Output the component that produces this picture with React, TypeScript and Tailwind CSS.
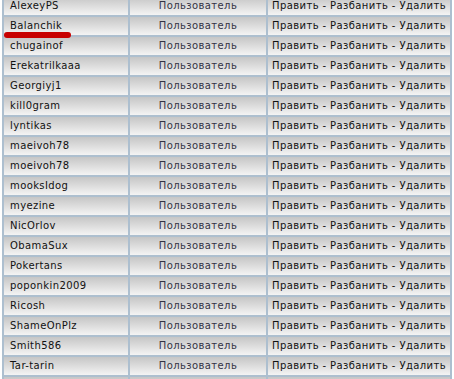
const users = [
  "AlexeyPS",
  "Balanchik",
  "chugainof",
  "Erekatrilkaaa",
  "Georgiyj1",
  "kill0gram",
  "lyntikas",
  "maeivoh78",
  "moeivoh78",
  "mooksIdog",
  "myezine",
  "NicOrlov",
  "ObamaSux",
  "Pokertans",
  "poponkin2009",
  "Ricosh",
  "ShameOnPlz",
  "Smith586",
  "Tar-tarin",
  "",
];

const cell = "h-[18px] p-0 bg-linear-to-b from-[#c6c6c6] to-[#f4f4f4] whitespace-nowrap";

export default function App() {
  return (
    <div className="relative w-[454px] h-[379px] overflow-hidden bg-white font-['DejaVu_Sans',Verdana,sans-serif] text-[10px] leading-[18px] tracking-[0.4px]">
      <table className="ml-[2px] -mt-[5px] w-[450px] border-separate border-spacing-[2px] bg-[#adbfcf] table-fixed">
        <colgroup>
          <col className="w-[124px]" />
          <col className="w-[136px]" />
          <col />
        </colgroup>
        <tbody>
          {users.map((name, i) => (
            <tr key={i}>
              <td className={`${cell} pl-[6px] text-[#111]`}>{name}</td>
              <td className={`${cell} text-center text-[#333344]`}>{name ? "Пользователь" : ""}</td>
              <td className={`${cell} text-center text-[#111]`}>
                {name ? "Править - Разбанить - Удалить" : ""}
              </td>
            </tr>
          ))}
        </tbody>
      </table>
      {/* red marker stroke under Balanchik */}
      <div className="absolute left-[4px] top-[32px] w-[67px] h-[6px] rounded-full bg-[#c80000]" />
    </div>
  );
}
